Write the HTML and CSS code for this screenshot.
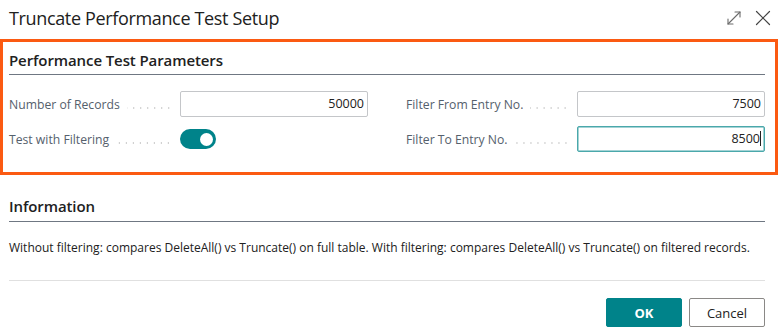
FILE: index.html
```html
<!DOCTYPE html>
<html lang="en">
<head>
<meta charset="utf-8">
<title>Truncate Performance Test Setup</title>
<link rel="stylesheet" href="styles.css">
</head>
<body>
<div class="dialog">
  <header class="titlebar">
    <h1 class="title">Truncate Performance Test Setup</h1>
    <div class="window-actions">
      <button class="icon-btn" aria-label="Expand">
        <svg width="16" height="16" viewBox="0 0 16 16" fill="none" stroke="#6b6b6b" stroke-width="1.1" stroke-linecap="round" stroke-linejoin="round">
          <path d="M2 14 L14 2"/>
          <path d="M9 2 H14 V7"/>
          <path d="M2 9 V14 H7"/>
        </svg>
      </button>
      <button class="icon-btn" aria-label="Close">
        <svg width="16" height="16" viewBox="0 0 16 16" fill="none" stroke="#444" stroke-width="1.2" stroke-linecap="round">
          <path d="M1.5 1.5 L14.5 14.5"/>
          <path d="M14.5 1.5 L1.5 14.5"/>
        </svg>
      </button>
    </div>
  </header>

  <section class="group group-highlight">
    <h2 class="group-title">Performance Test Parameters</h2>
    <div class="fields">
      <div class="field">
        <label class="field-label"><span>Number of Records</span><span class="leader"></span></label>
        <div class="input">50000</div>
      </div>
      <div class="field">
        <label class="field-label"><span>Filter From Entry No.</span><span class="leader"></span></label>
        <div class="input">7500</div>
      </div>
      <div class="field">
        <label class="field-label"><span>Test with Filtering</span><span class="leader"></span></label>
        <div class="toggle-wrap"><span class="toggle"><span class="knob"></span></span></div>
      </div>
      <div class="field">
        <label class="field-label"><span>Filter To Entry No.</span><span class="leader"></span></label>
        <div class="input input-focus">8500<span class="caret"></span></div>
      </div>
    </div>
  </section>

  <section class="group group-info">
    <h2 class="group-title">Information</h2>
    <p class="info-text">Without filtering: compares DeleteAll() vs Truncate() on full table. With filtering: compares DeleteAll() vs Truncate() on filtered records.</p>
  </section>

  <footer class="footer">
    <button class="btn btn-primary">OK</button>
    <button class="btn btn-secondary">Cancel</button>
  </footer>
</div>
</body>
</html>
```

FILE: styles.css
```css
* { box-sizing: border-box; }

html, body {
  margin: 0;
  padding: 0;
  background: #ffffff;
}

body {
  font-family: "Open Sans", "Noto Sans", sans-serif;
  color: #212121;
}

.dialog {
  width: 780px;
  height: 333px;
  padding: 0 15px 0 9px;
}

.titlebar {
  display: flex;
  align-items: center;
  justify-content: space-between;
  height: 39px;
  padding-bottom: 4px;
}

.title {
  margin: 0;
  font-size: 18px;
  font-weight: 400;
  color: #212121;
  letter-spacing: -0.35px;
  line-height: 24px;
}

.window-actions {
  display: flex;
  align-items: center;
  gap: 11px;
  margin-right: -7px;
}

.icon-btn {
  border: 0;
  background: none;
  padding: 0;
  width: 18px;
  height: 18px;
  display: flex;
  align-items: center;
  justify-content: center;
}

.group-highlight {
  margin: 0 -13px 0 -9px;
  border: 3px solid #fb5a12;
  padding: 0 10px 20px 6px;
}

.group-title {
  margin: 7px 0 0;
  font-size: 15px;
  font-weight: 600;
  letter-spacing: -0.1px;
  line-height: 22px;
  padding-bottom: 3px;
  border-bottom: 1px solid #6f7782;
  color: #212121;
}

.fields {
  display: grid;
  grid-template-columns: 1fr 1fr;
  column-gap: 38px;
  row-gap: 9px;
  margin-top: 16px;
}

.field {
  display: flex;
  align-items: center;
  height: 26px;
}

.field-label {
  width: 171px;
  flex: none;
  display: flex;
  align-items: center;
  font-size: 12.2px;
  color: #55606c;
  padding-right: 8px;
}

.leader {
  flex: 1;
  height: 12px;
  margin-left: 7px;
  background-image: radial-gradient(circle, #c8c8c8 0.55px, transparent 0.95px);
  background-size: 7px 4px;
  background-repeat: repeat-x;
  background-position: right bottom;
}

.input {
  flex: 1;
  height: 26px;
  border: 1px solid #c4c6c9;
  border-radius: 2px;
  font-size: 12.5px;
  text-align: right;
  padding: 0 3px;
  line-height: 24px;
  color: #212121;
}

.input-focus {
  border-color: #4aa8ab;
  box-shadow: inset 0 0 0 0.5px #4aa8ab;
}

.caret {
  display: inline-block;
  width: 1px;
  height: 15px;
  background: #212121;
  vertical-align: -3px;
  margin-left: 0;
}

.toggle-wrap {
  flex: 1;
  display: flex;
  align-items: center;
}

.toggle {
  width: 36px;
  height: 20px;
  border-radius: 10px;
  background: #00838a;
  display: flex;
  align-items: center;
  justify-content: flex-end;
  padding-right: 3px;
}

.knob {
  width: 13px;
  height: 13px;
  border-radius: 50%;
  background: #ffffff;
}

.group-info .group-title {
  margin-top: 20px;
  padding-bottom: 4px;
}

.info-text {
  margin: 17px 0 0;
  font-size: 12px;
  line-height: 18px;
  color: #212121;
  padding-bottom: 23px;
  border-bottom: 1px solid #e0e0e0;
}

.footer {
  display: flex;
  justify-content: flex-end;
  gap: 7px;
  padding-top: 17px;
}

.btn {
  width: 76px;
  height: 29px;
  border-radius: 2px;
  font-family: inherit;
  font-size: 13px;
  padding: 0;
}

.btn-primary {
  background: #00838a;
  border: 1px solid #00838a;
  color: #ffffff;
  font-weight: 700;
}

.btn-secondary {
  background: #ffffff;
  border: 1px solid #8a8886;
  color: #212121;
}
```
